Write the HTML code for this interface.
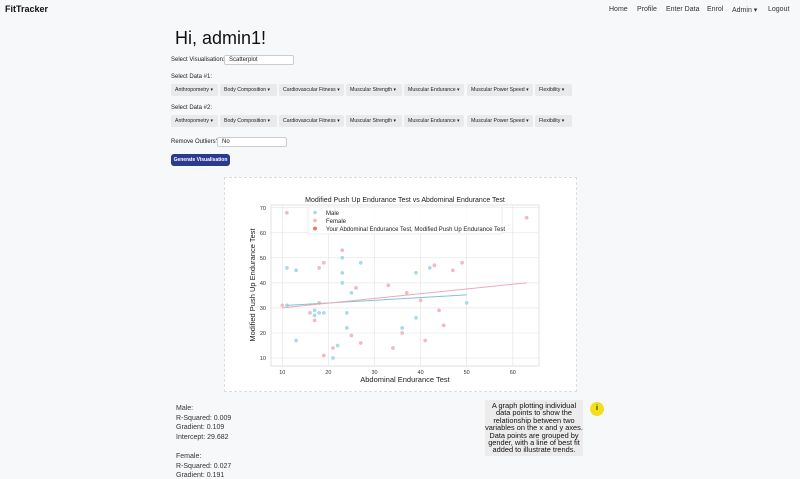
<!DOCTYPE html>
<html><head><meta charset="utf-8"><style>
*{margin:0;padding:0;box-sizing:border-box}
body{width:800px;height:476px;overflow:hidden;background:#f7f8fa;font-family:"Liberation Sans",sans-serif;color:#222;position:relative}
.a{position:absolute;white-space:nowrap}
.nav{font-size:7px;color:#333;top:6px}
.lbl{font-size:6px;color:#222}
.btn{position:absolute;height:12px;background:#e9eaec;border-radius:2px;font-size:5.2px;line-height:12px;padding-left:4px;color:#222;white-space:nowrap}
.inp{position:absolute;height:10px;background:#fff;border:1px solid #ccc;border-radius:2px;font-size:6px;line-height:8px;padding-left:4px}
.st{font-size:7px;color:#333;left:176px}
</style></head><body>
<div class="a" style="left:5px;top:4px;font-size:9px;font-weight:bold;color:#111">FitTracker</div>
<div class="a nav" style="left:609px">Home</div>
<div class="a nav" style="left:637px">Profile</div>
<div class="a nav" style="left:666px">Enter Data</div>
<div class="a nav" style="left:707px">Enrol</div>
<div class="a nav" style="left:732px">Admin ▾</div>
<div class="a nav" style="left:768px">Logout</div>
<div class="a" style="left:175px;top:28px;font-size:18px;color:#111">Hi, admin1!</div>
<div class="a lbl" style="left:171px;top:57px">Select Visualisation:</div>
<div class="inp" style="left:224px;top:55px;width:70px">Scatterplot</div>
<div class="a lbl" style="left:171px;top:74px">Select Data #1:</div>
<div class="btn" style="left:171px;top:84px;width:47px">Anthropometry ▾</div>
<div class="btn" style="left:220px;top:84px;width:57px">Body Composition ▾</div>
<div class="btn" style="left:279px;top:84px;width:65px">Cardiovascular Fitness ▾</div>
<div class="btn" style="left:346px;top:84px;width:56px">Muscular Strength ▾</div>
<div class="btn" style="left:404px;top:84px;width:60px">Muscular Endurance ▾</div>
<div class="btn" style="left:467px;top:84px;width:66px">Muscular Power Speed ▾</div>
<div class="btn" style="left:535px;top:84px;width:37px">Flexibility ▾</div>
<div class="a lbl" style="left:171px;top:105px">Select Data #2:</div>
<div class="btn" style="left:171px;top:115px;width:47px">Anthropometry ▾</div>
<div class="btn" style="left:220px;top:115px;width:57px">Body Composition ▾</div>
<div class="btn" style="left:279px;top:115px;width:65px">Cardiovascular Fitness ▾</div>
<div class="btn" style="left:346px;top:115px;width:56px">Muscular Strength ▾</div>
<div class="btn" style="left:404px;top:115px;width:60px">Muscular Endurance ▾</div>
<div class="btn" style="left:467px;top:115px;width:66px">Muscular Power Speed ▾</div>
<div class="btn" style="left:535px;top:115px;width:37px">Flexibility ▾</div>
<div class="a lbl" style="left:171px;top:139px">Remove Outliers?</div>
<div class="inp" style="left:217px;top:137px;width:70px">No</div>
<div class="a" style="left:171px;top:154px;width:59px;height:12px;background:#2b3a8f;border-radius:3px;color:#fff;font-size:5px;font-weight:bold;line-height:12px;text-align:center">Generate Visualisation</div>
<div class="a" style="left:224px;top:177px;width:353px;height:215px;background:#fff;border:1px dashed #ddd"></div>
<svg class="a" style="left:0;top:0" width="800" height="476">
<rect x="271" y="205" width="268" height="161" fill="#fff" stroke="#ccc" stroke-width="0.6"/>
<g stroke="#e3e3e3" stroke-width="0.6">
<line x1="282.3" y1="205" x2="282.3" y2="366"/><line x1="328.4" y1="205" x2="328.4" y2="366"/><line x1="374.5" y1="205" x2="374.5" y2="366"/><line x1="420.6" y1="205" x2="420.6" y2="366"/><line x1="466.7" y1="205" x2="466.7" y2="366"/><line x1="512.8" y1="205" x2="512.8" y2="366"/>
<line x1="271" y1="358" x2="539" y2="358"/><line x1="271" y1="333" x2="539" y2="333"/><line x1="271" y1="307.9" x2="539" y2="307.9"/><line x1="271" y1="282.9" x2="539" y2="282.9"/><line x1="271" y1="257.8" x2="539" y2="257.8"/><line x1="271" y1="232.8" x2="539" y2="232.8"/><line x1="271" y1="207.7" x2="539" y2="207.7"/>
</g>
<g font-size="5.5" fill="#333" text-anchor="end">
<text x="266" y="360">10</text><text x="266" y="335">20</text><text x="266" y="310">30</text><text x="266" y="285">40</text><text x="266" y="260">50</text><text x="266" y="235">60</text><text x="266" y="210">70</text></g>
<g font-size="5.5" fill="#333" text-anchor="middle">
<text x="282.3" y="374">10</text><text x="328.4" y="374">20</text><text x="374.5" y="374">30</text><text x="420.6" y="374">40</text><text x="466.7" y="374">50</text><text x="512.8" y="374">60</text></g>
<text x="405" y="202" font-size="7" fill="#222" text-anchor="middle">Modified Push Up Endurance Test vs Abdominal Endurance Test</text>
<text x="405" y="382" font-size="7.5" fill="#222" text-anchor="middle">Abdominal Endurance Test</text>
<text transform="translate(255,285) rotate(-90)" font-size="7.5" fill="#222" text-anchor="middle">Modified Push Up Endurance Test</text>
<g transform="translate(282.3,358) scale(4.61,-2.505) translate(-10,-10)">
<g fill="#a8dbe6">
<ellipse cx="11" cy="46" rx=".4" ry=".75"/><ellipse cx="13" cy="45" rx=".4" ry=".75"/><ellipse cx="13" cy="17" rx=".4" ry=".75"/><ellipse cx="11" cy="31" rx=".4" ry=".75"/><ellipse cx="17" cy="29" rx=".4" ry=".75"/><ellipse cx="17" cy="27" rx=".4" ry=".75"/><ellipse cx="18" cy="28" rx=".4" ry=".75"/><ellipse cx="19" cy="28" rx=".4" ry=".75"/><ellipse cx="22" cy="15" rx=".4" ry=".75"/><ellipse cx="21" cy="10" rx=".4" ry=".75"/><ellipse cx="23" cy="50" rx=".4" ry=".75"/><ellipse cx="23" cy="44" rx=".4" ry=".75"/><ellipse cx="23" cy="40" rx=".4" ry=".75"/><ellipse cx="24" cy="28" rx=".4" ry=".75"/><ellipse cx="24" cy="22" rx=".4" ry=".75"/><ellipse cx="25" cy="36" rx=".4" ry=".75"/><ellipse cx="27" cy="48" rx=".4" ry=".75"/><ellipse cx="36" cy="22" rx=".4" ry=".75"/><ellipse cx="39" cy="44" rx=".4" ry=".75"/><ellipse cx="39" cy="26" rx=".4" ry=".75"/><ellipse cx="42" cy="46" rx=".4" ry=".75"/><ellipse cx="50" cy="32" rx=".4" ry=".75"/></g>
<g fill="#f4b8c4">
<ellipse cx="11" cy="68" rx=".4" ry=".75"/><ellipse cx="10" cy="31" rx=".4" ry=".75"/><ellipse cx="16" cy="28" rx=".4" ry=".75"/><ellipse cx="17" cy="25" rx=".4" ry=".75"/><ellipse cx="18" cy="46" rx=".4" ry=".75"/><ellipse cx="18" cy="32" rx=".4" ry=".75"/><ellipse cx="19" cy="48" rx=".4" ry=".75"/><ellipse cx="19" cy="11" rx=".4" ry=".75"/><ellipse cx="21" cy="14" rx=".4" ry=".75"/><ellipse cx="23" cy="53" rx=".4" ry=".75"/><ellipse cx="25" cy="19" rx=".4" ry=".75"/><ellipse cx="26" cy="38" rx=".4" ry=".75"/><ellipse cx="27" cy="16" rx=".4" ry=".75"/><ellipse cx="33" cy="39" rx=".4" ry=".75"/><ellipse cx="34" cy="14" rx=".4" ry=".75"/><ellipse cx="36" cy="20" rx=".4" ry=".75"/><ellipse cx="37" cy="36" rx=".4" ry=".75"/><ellipse cx="40" cy="33" rx=".4" ry=".75"/><ellipse cx="41" cy="17" rx=".4" ry=".75"/><ellipse cx="43" cy="47" rx=".4" ry=".75"/><ellipse cx="44" cy="29" rx=".4" ry=".75"/><ellipse cx="45" cy="23" rx=".4" ry=".75"/><ellipse cx="47" cy="45" rx=".4" ry=".75"/><ellipse cx="49" cy="48" rx=".4" ry=".75"/><ellipse cx="63" cy="66" rx=".4" ry=".75"/></g>
<line x1="11" y1="31" x2="50" y2="35.2" stroke="#7fc4d6" stroke-width="1" vector-effect="non-scaling-stroke"/>
<line x1="10" y1="30" x2="63" y2="40" stroke="#f0a8b8" stroke-width="1" vector-effect="non-scaling-stroke"/>
</g>
<rect x="308" y="207" width="194" height="27" fill="#fff" fill-opacity=".85" stroke="#ddd" stroke-width="0.5" rx="1"/>
<circle cx="315" cy="212.5" r="1.8" fill="#a8dbe6"/><text x="326" y="215" font-size="6" fill="#222">Male</text>
<circle cx="315" cy="220.5" r="1.8" fill="#f4b8c4"/><text x="326" y="223" font-size="6" fill="#222">Female</text>
<circle cx="315" cy="228.5" r="2" fill="#e08060"/><text x="326" y="231" font-size="6" fill="#222">Your Abdominal Endurance Test, Modified Push Up Endurance Test</text>
</svg>
<div class="a st" style="top:405px">Male:</div>
<div class="a st" style="top:415px">R-Squared: 0.009</div>
<div class="a st" style="top:424px">Gradient: 0.109</div>
<div class="a st" style="top:434px">Intercept: 29.682</div>
<div class="a st" style="top:453px">Female:</div>
<div class="a st" style="top:463px">R-Squared: 0.027</div>
<div class="a st" style="top:472px">Gradient: 0.191</div>
<div class="a" style="left:485px;top:400px;width:98px;height:56px;background:#ececec;font-size:7.4px;line-height:7.4px;text-align:center;padding-top:2px;color:#111">A graph plotting individual<br>data points to show the<br>relationship between two<br>variables on the x and y axes.<br>Data points are grouped by<br>gender, with a line of best fit<br>added to illustrate trends.</div>
<div class="a" style="left:590px;top:402px;width:14px;height:14px;border-radius:50%;background:#f2e020;font-size:7px;font-weight:bold;text-align:center;line-height:14px">i</div>
</body></html>
